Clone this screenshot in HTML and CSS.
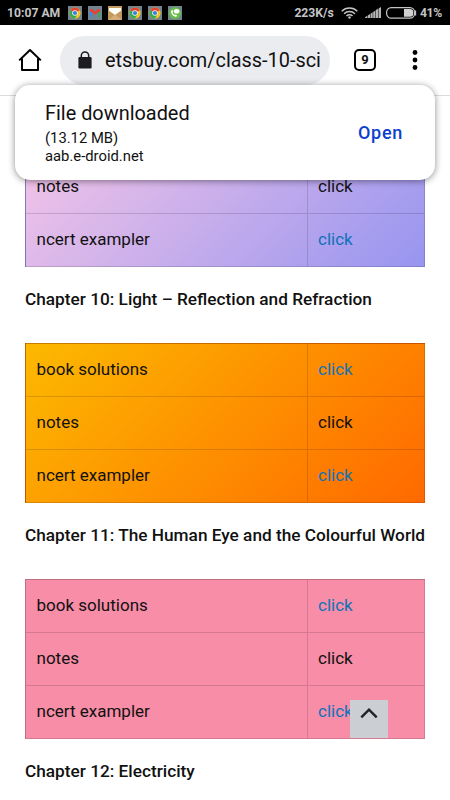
FILE: index.html
```
<!DOCTYPE html>
<html lang="en">

<head>
    <meta charset="UTF-8">
    <meta name="viewport" content="width=device-width, initial-scale=1">
    <link rel="stylesheet" href="styles.css">
    <title>Class 10 Science</title>
</head>

<body>
    <svg class="symbols" width="0" height="0">
        <symbol id="chrome" viewBox="0 0 14 14">
            <rect width="14" height="14" fill="#738491" />
            <circle cx="7" cy="7" r="5.6" fill="#f8c51c" />
            <path d="M7 7 2.15 4.2A5.6 5.6 0 0 1 11.85 4.2Z" fill="#e8412f" />
            <path d="M7 7 2.15 4.2A5.6 5.6 0 0 0 7 12.6L9.2 8.6Z" fill="#35a853" />
            <circle cx="7" cy="7" r="2.8" fill="#f4f4f4" />
            <circle cx="7" cy="7" r="2.1" fill="#347fe0" />
        </symbol>
    </svg>

    <div class="status-bar">
        <span class="clock">10:07 AM</span>
        <div class="notifications">
            <svg width="14" height="14"><use href="#chrome" /></svg>
            <svg width="14" height="14" viewBox="0 0 14 14">
                <rect width="14" height="14" fill="#738491" />
                <path d="M2 3.500h2V11H2Z" fill="#3f83ee" />
                <path d="M10 3.500h2V11h-2Z" fill="#38a654" />
                <path d="M2 3h2l3 2.600L10 3h2v2L7 8.800 2 5Z" fill="#ea3f31" />
            </svg>
            <svg width="14" height="14" viewBox="0 0 14 14">
                <rect width="14" height="14" fill="#c49960" />
                <path d="M1 2h12v2.800L7 9 1 4.800Z" fill="#fffdf8" />
                <path d="M0 14 7 8.500l7 5.500Z" fill="#d6ad78" />
            </svg>
            <svg width="14" height="14"><use href="#chrome" /></svg>
            <svg width="14" height="14"><use href="#chrome" /></svg>
            <svg width="14" height="14" viewBox="0 0 14 14">
                <rect width="14" height="14" fill="#738491" />
                <circle cx="7" cy="7" r="6" fill="#66bf45" />
                <path d="M3 5c0 3.200 2.400 5.800 5.300 5.800l1-1.300-1.700-1-.9.600C5.500 8.200 4.900 7.200 4.600 6.200l.6-.8L4.300 3.800Z" fill="#fff" />
                <ellipse cx="8.600" cy="5.200" rx="2.800" ry="2.300" fill="#fff" />
            </svg>
        </div>
        <span class="speed">223K/s</span>
        <svg class="wifi" width="17" height="12" viewBox="0 0 17 12" fill="none" stroke="#c4c4c4" stroke-width="1.5">
            <path d="M.7 4.300a11 11 0 0 1 15.600 0M3.100 6.700a7.600 7.600 0 0 1 10.800 0M5.500 9a4.200 4.200 0 0 1 6 0" />
            <circle cx="8.500" cy="10.500" r="1.200" fill="#c4c4c4" stroke="none" />
        </svg>
        <svg class="signal" width="16" height="11" viewBox="0 0 16 11" fill="#b4b4b4">
            <path d="M0 11V10.200L2.300 8.800V11ZM2.800 11V8.500L5 7.100V11ZM5.500 11V6.700L7.700 5.200V11ZM8.200 11V4.900l2.200-1.400V11ZM10.900 11V3.100L13 1.700V11ZM13.500 11V1.400L16 0v11Z" />
        </svg>
        <svg class="battery" width="31" height="12" viewBox="0 0 31 12">
            <rect x=".6" y=".6" width="28" height="10.600" rx="4.600" fill="none" stroke="#c4c4c4" stroke-width="1.200" />
            <path d="M18 2h6a3.300 3.300 0 0 1 3.300 3.300v1.200A3.300 3.300 0 0 1 24 9.800h-6Z" fill="#d0d0d0" />
            <path d="M29.500 3.500v5" stroke="#c4c4c4" stroke-width="1.300" />
        </svg>
        <span class="percent">41%</span>
    </div>

    <div class="toolbar">
        <svg class="home" width="24" height="24" viewBox="0 0 24 24" fill="none" stroke="#000" stroke-width="2" stroke-linejoin="round">
            <path d="M1.200 12.400 12 2l10.800 10.400M4 10.500V22h16V10.500" />
        </svg>
        <div class="address">
            <svg width="14" height="18" viewBox="0 0 14 18">
                <path d="M3.300 7V4.700a3.700 3.700 0 0 1 7.400 0V7" fill="none" stroke="#1c1c1e" stroke-width="1.500" />
                <rect x=".4" y="6" width="13.200" height="11.500" rx="1.300" fill="#1c1c1e" />
            </svg>
            <span class="url">etsbuy.com/class-10-sci</span>
        </div>
        <div class="tab-count">9</div>
        <svg class="menu" width="6" height="20" viewBox="0 0 6 20">
            <circle cx="3" cy="2.500" r="2.400" />
            <circle cx="3" cy="10" r="2.400" />
            <circle cx="3" cy="17.500" r="2.400" />
        </svg>
    </div>

    <div class="download">
        <div class="download-text">
            <div class="download-title">File downloaded</div>
            <div>(13.12 MB)</div>
            <div>aab.e-droid.net</div>
        </div>
        <a class="open">Open</a>
    </div>

    <main class="page">
        <table class="lilac">
            <tr><td></td><td></td></tr>
            <tr><td>notes</td><td>click</td></tr>
            <tr><td>ncert exampler</td><td><a>click</a></td></tr>
        </table>
        <h4>Chapter 10: Light – Reflection and Refraction</h4>
        <table class="orange">
            <tr><td>book solutions</td><td><a>click</a></td></tr>
            <tr><td>notes</td><td>click</td></tr>
            <tr><td>ncert exampler</td><td><a>click</a></td></tr>
        </table>
        <h4>Chapter 11: The Human Eye and the Colourful World</h4>
        <table class="pink">
            <tr><td>book solutions</td><td><a>click</a></td></tr>
            <tr><td>notes</td><td>click</td></tr>
            <tr><td>ncert exampler</td><td><a>click</a></td></tr>
        </table>
        <h4>Chapter 12: Electricity</h4>
    </main>

    <div class="to-top">
        <svg width="18" height="12" viewBox="0 0 18 12" fill="none" stroke="#222" stroke-width="2.400">
            <path d="M1.300 10.300 9 2.600l7.700 7.700" />
        </svg>
    </div>
</body>

</html>
```
FILE: styles.css
```
* {
    box-sizing: border-box;
}

body {
    margin: 0;
    height: 800px;
    overflow: hidden;
    position: relative;
    font-family: Roboto, sans-serif;
    background-color: #fff;
    color: #111;
}

svg {
    display: block;
    flex: none;
}

.symbols {
    position: absolute;
}

/* status bar */

.status-bar {
    display: flex;
    align-items: center;
    height: 25px;
    padding: 0 8px 0 7px;
    background-color: #000;
    color: #c4c4c4;
    font-size: 12.2px;
    font-weight: bold;
    white-space: nowrap;
}

.clock {
    width: 61px;
}

.notifications {
    display: flex;
    gap: 6px;
}

.speed {
    margin-left: auto;
}

.wifi {
    margin-left: 7px;
}

.signal {
    margin-left: 7px;
}

.battery {
    margin-left: 5px;
}

.percent {
    margin-left: 3px;
    letter-spacing: -0.3px;
}

/* browser toolbar */

.toolbar {
    display: flex;
    align-items: center;
    height: 71px;
    padding: 0 32px 0 18px;
    border-bottom: 1px solid #dcdcdc;
}

.address {
    display: flex;
    align-items: center;
    width: 270px;
    height: 49px;
    margin-left: 18px;
    padding-left: 18px;
    border-radius: 25px;
    background-color: #ebecf0;
}

.url {
    margin-left: 13px;
    font-size: 19.9px;
    line-height: 24px;
    padding-top: 1px;
    white-space: nowrap;
}

.tab-count {
    width: 22px;
    height: 22px;
    margin-left: 24px;
    border: 2px solid #000;
    border-radius: 5px;
    font-size: 13px;
    font-weight: bold;
    line-height: 18px;
    text-align: center;
}

.menu {
    margin-left: auto;
}

/* download message */

.download {
    position: absolute;
    top: 85px;
    left: 15px;
    display: flex;
    align-items: center;
    justify-content: space-between;
    width: 420px;
    height: 95px;
    padding: 0 32px 0 30px;
    border-radius: 15px;
    background-color: #fff;
    box-shadow: 0 1px 7px rgba(0, 0, 0, 0.45);
}

.download-text {
    font-size: 14.8px;
    line-height: 18px;
}

.download-title {
    padding-bottom: 2px;
    font-size: 19.9px;
    line-height: 27px;
}

.open {
    color: #0b3fcb;
    font-size: 18px;
    font-weight: 500;
    letter-spacing: 0.7px;
}

/* chapters */

.page {
    padding: 11px 25px 0;
}

table {
    width: 400px;
    table-layout: fixed;
    border-collapse: separate;
    border-spacing: 0;
    border-top: 1px solid rgba(0, 0, 0, 0.22);
    border-left: 1px solid rgba(0, 0, 0, 0.22);
}

td {
    height: 53px;
    padding: 0 10px 2px 10.5px;
    border-right: 1px solid rgba(0, 0, 0, 0.14);
    border-bottom: 1px solid rgba(0, 0, 0, 0.14);
    font-size: 17px;
}

td:first-child {
    width: 282px;
}

td:last-child {
    padding-left: 10px;
}

td a {
    color: #1072ba;
}

.lilac {
    background: linear-gradient(135deg, #fbc8e6 0%, #9795f0 100%);
}

.orange {
    background: linear-gradient(135deg, #fcb900 0%, #ff6900 100%);
}

.pink {
    background-color: #f78da7;
}

h4 {
    height: 76px;
    margin: 0;
    font-size: 17.24px;
    font-weight: 500;
    line-height: 64px;
    white-space: nowrap;
}

.to-top {
    position: absolute;
    top: 700px;
    left: 350px;
    display: flex;
    justify-content: center;
    width: 38px;
    height: 38px;
    padding-top: 7px;
    background-color: #cbced3;
}
```
